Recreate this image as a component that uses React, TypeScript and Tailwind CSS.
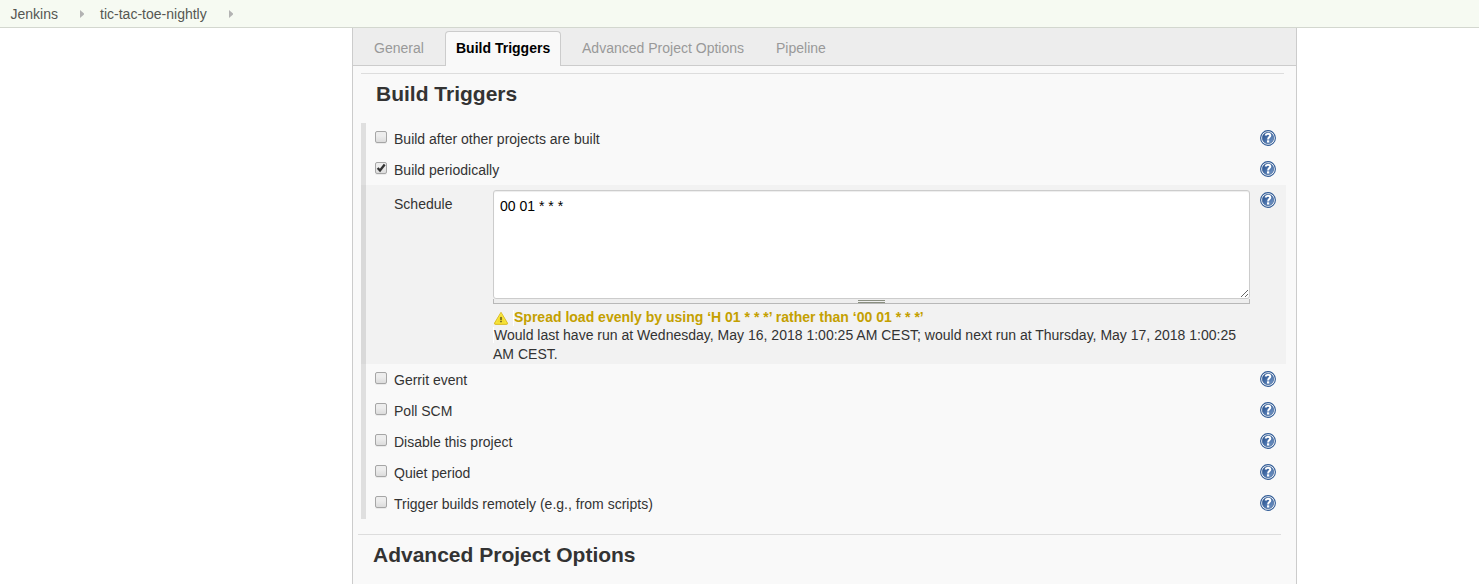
import React, { useState } from "react";

function HelpIcon() {
  return (
    <svg width="16" height="16" viewBox="0 0 16 16" className="block shrink-0">
      <defs>
        <linearGradient id="help-fill" x1="0" y1="0" x2="1" y2="1">
          <stop offset="0" stopColor="#204a87" />
          <stop offset="0.5" stopColor="#4a72ab" />
          <stop offset="1" stopColor="#7f9fca" />
        </linearGradient>
      </defs>
      <circle cx="8" cy="8" r="7.4" fill="#fff" stroke="#305b96" strokeWidth="1.1" />
      <circle cx="8" cy="8" r="5.7" fill="url(#help-fill)" stroke="#2c568f" strokeWidth="0.6" />
      <path
        d="M5.5 5.5C5.8 4.2 6.8 3.7 8 3.7C9.4 3.7 10.3 4.4 10.3 5.5C10.3 7 8.1 7.2 8.1 9.4"
        fill="none"
        stroke="#fff"
        strokeWidth="2"
      />
      <rect x="7" y="10.3" width="2.2" height="2.2" fill="#fff" />
    </svg>
  );
}

function WarningIcon() {
  return (
    <svg width="16" height="16" viewBox="0 0 16 16" className="block shrink-0">
      <path
        d="M8 2.3L14.5 13.1Q14.8 14.3 13.8 14.4H2.2Q1.2 14.3 1.5 13.1Z"
        fill="#f3dc2c"
        stroke="#dcbf2c"
        strokeWidth="1"
        strokeLinejoin="round"
      />
      <path d="M8 3.8L12.9 12.9H3.1Z" fill="none" stroke="#f8e94e" strokeWidth="0.7" />
      <path d="M8 7V10.2" stroke="#6e6524" strokeWidth="1.7" />
      <path d="M8 10.9V12.3" stroke="#6e6524" strokeWidth="1.7" />
    </svg>
  );
}

function OptionRow({ label, initial = false }: { label: string; initial?: boolean }) {
  const [checked, setChecked] = useState(initial);
  return (
    <div className="flex h-[31px] items-start pl-[9px] pr-[10px]">
      <label className="flex flex-1 items-start">
        <span className="mt-2 grid h-3 w-3 shrink-0">
          <input
            type="checkbox"
            checked={checked}
            onChange={() => setChecked(!checked)}
            className="col-start-1 row-start-1 m-0 h-3 w-3 appearance-none rounded-[2px] border border-[#a6a6a6] bg-linear-to-b from-[#ededed] from-38% to-[#dcdcdc] shadow-[0_1px_0_rgba(0,0,0,0.06)]"
          />
          {checked && (
            <svg
              width="12"
              height="12"
              viewBox="0 0 12 12"
              className="pointer-events-none col-start-1 row-start-1"
            >
              <path d="M2.6 6L5 8.5L9.7 2.5" fill="none" stroke="#333" strokeWidth="2.3" />
            </svg>
          )}
        </span>
        <span className="ml-[7px] pt-[7px] leading-[18px]">{label}</span>
      </label>
      <div className="pt-[7px]">
        <HelpIcon />
      </div>
    </div>
  );
}

function Crumb({ label }: { label: string }) {
  return (
    <>
      <span>{label}</span>
      <svg width="4" height="8" viewBox="0 0 4 8" className="ml-[22px] mr-4">
        <path d="M0 0L4 3.6V4.4L0 8Z" fill="#b3b3b3" />
      </svg>
    </>
  );
}

const otherTriggers = [
  "Gerrit event",
  "Poll SCM",
  "Disable this project",
  "Quiet period",
  "Trigger builds remotely (e.g., from scripts)",
];

export default function App() {
  return (
    <div className="flex h-[584px] w-[1479px] flex-col overflow-hidden bg-white font-['Liberation_Sans',Arial,sans-serif] text-[14.02px] text-[#333]">
      <header className="flex h-7 shrink-0 items-center border-b border-[#d3d7cf] bg-[#f6faf2] pl-[10.5px] pt-px leading-[18px] text-[#555753]">
        <Crumb label="Jenkins" />
        <Crumb label="tic-tac-toe-nightly" />
      </header>
      <main className="ml-[352px] flex w-[945px] flex-1 flex-col border-x border-[#ccc] bg-[#f9f9f9]">
        <nav className="flex h-[38px] shrink-0 items-start bg-[#ededed] leading-[34px] text-[#999] shadow-[inset_0_-1px_0_#ccc]">
          <div className="w-[92px] pl-[21px] pt-[3px]">General</div>
          <div className="mt-[3px] h-[35px] w-[116px] rounded-t-[4px] border border-b-0 border-[#ccc] bg-[#f9f9f9] pl-[10px] font-bold leading-[32px] text-black">
            Build Triggers
          </div>
          <div className="w-[194px] pl-[21px] pt-[3px]">Advanced Project Options</div>
          <div className="pl-[21px] pt-[3px]">Pipeline</div>
        </nav>
        <h2 className="ml-2 mt-[7px] h-[50px] w-[923px] shrink-0 border-t border-[#ddd] pl-[15px] pt-[7px] text-[21px] font-bold leading-[26px]">
          Build Triggers
        </h2>
        <section className="ml-2 w-[925px] shrink-0 border-l-[5px] border-[#dfdfdf]">
          <OptionRow label="Build after other projects are built" />
          <OptionRow label="Build periodically" initial />
          <div className="-ml-[5px] flex h-[179px] items-start border-l-[5px] border-[#d9d9d9] bg-[#f2f2f2] pl-7 pr-[10px]">
            <label htmlFor="schedule" className="w-[99px] shrink-0 pt-[10px] leading-[18px]">
              Schedule
            </label>
            <div className="w-[757px] shrink-0 pt-[5px]">
              <textarea
                id="schedule"
                defaultValue="00 01 * * *"
                className="block h-[109px] w-[757px] resize rounded-[3px] border border-[#ccc] bg-white px-[6px] py-[6px] leading-[18px] text-black shadow-[inset_0_1px_1px_rgba(0,0,0,0.075)] outline-none"
              />
              <div className="flex h-[5px] justify-center border border-t-0 border-[#b8b8b8] bg-[#eee]">
                <div className="mt-px h-[3px] w-[27px] border-y border-[#8a8f80]" />
              </div>
              <div className="flex h-[22px] items-start pt-[4px] font-bold leading-[18px] text-[#c4a000]">
                <div className="pt-[2px]">
                  <WarningIcon />
                </div>
                <div className="ml-1 mt-[2px] h-4 w-px bg-white" />
                <span>Spread load evenly by using ‘H 01 * * *’ rather than ‘00 01 * * *’</span>
              </div>
              <div className="leading-[19px]">
                <span className="inline-block h-4 w-px bg-white align-[-3px]" />
                Would last have run at Wednesday, May 16, 2018 1:00:25 AM CEST; would next run at
                Thursday, May 17, 2018 1:00:25 AM CEST.
              </div>
            </div>
            <div className="ml-[10px] pt-[7px]">
              <HelpIcon />
            </div>
          </div>
          {otherTriggers.map((label) => (
            <OptionRow key={label} label={label} />
          ))}
        </section>
        <h2 className="ml-[5px] mt-[15px] w-[923px] shrink-0 border-t border-[#ddd] pl-[15px] pt-[7px] text-[21px] font-bold leading-[26px]">
          Advanced Project Options
        </h2>
      </main>
    </div>
  );
}
